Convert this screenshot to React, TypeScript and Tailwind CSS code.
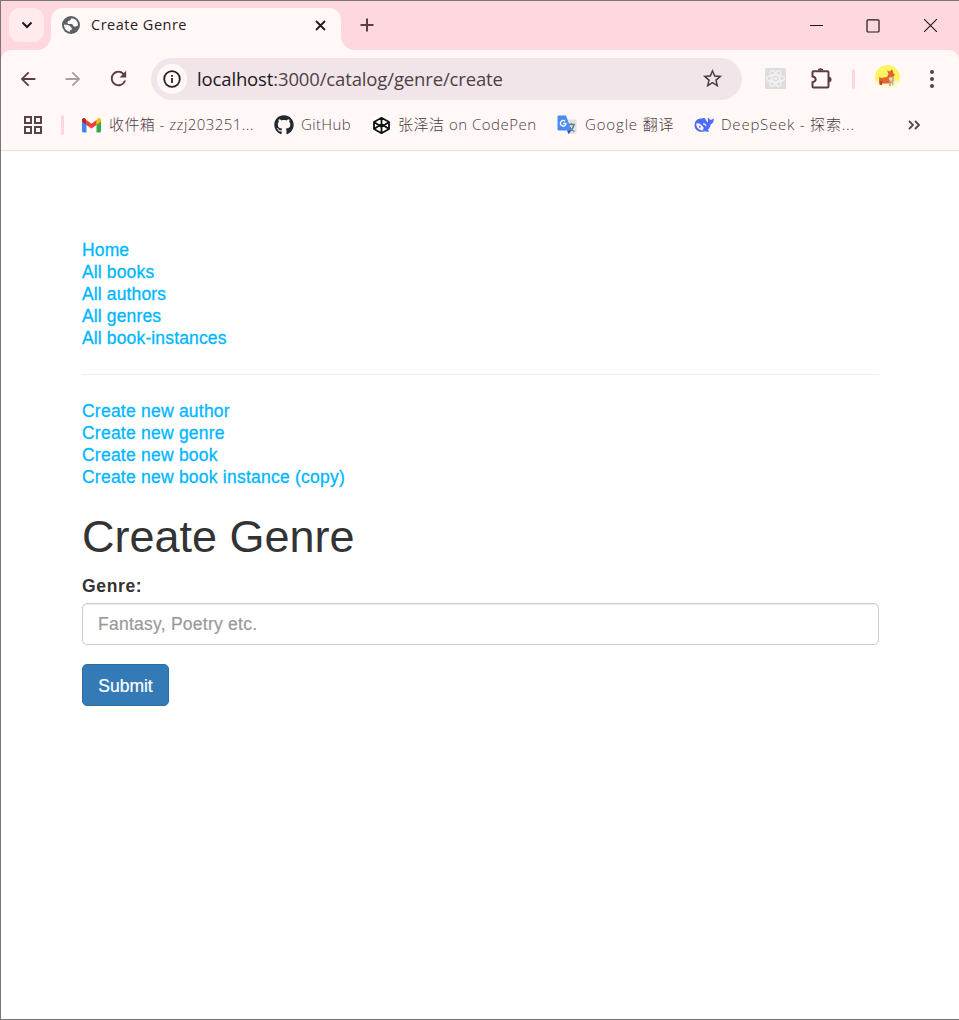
import type { ReactNode } from "react";
import { MdArrowBack, MdArrowForward, MdRefresh, MdStarOutline } from "react-icons/md";
import { FaGithub } from "react-icons/fa";

const uiFont = "font-['Open_Sans','Noto_Sans_CJK_SC',sans-serif]";

function GlobeIcon() {
  return (
    <svg className="mt-[8px] shrink-0" width="18" height="18" viewBox="0 0 18 18">
      <circle cx="9" cy="9" r="9" fill="#5b6065" />
      <path d="M9.500 2.200c-1 .5-.3 1.700-1.500 2.300-1.500.6-2.300.2-2.500 1.700-.1 1.300.5 1.800 2.200 1.800 2.500 0 3.300.2 3.300 1.600 0 1 1.500.8 2.600.8 1.300 0 1.900-.4 2.400-1.400C16.200 5.500 13.500 2.400 9.500 2.200Z" fill="#fff8f7" />
      <path d="M2 8.500c0 4 2.500 6.700 6 7.300v-1.700c2 0 1.800-1 1.800-2.200C8.700 11.500 8.500 10 6.800 9.400 5.500 8.800 3.500 8.700 2 8.500Z" fill="#fff8f7" />
    </svg>
  );
}

function TabStrip() {
  return (
    <div className="flex h-[49px] shrink-0 bg-[#ffd8df] pl-2 pt-[7px]">
      <button className="flex h-[34px] w-[35px] items-center justify-center rounded-[11px] bg-[#ffebed]" aria-label="Search tabs">
        <svg width="12" height="8" viewBox="0 0 12 8" fill="none" stroke="#1d1718" strokeWidth="2">
          <path d="M1.500 1.500 6 6l4.500-4.500" />
        </svg>
      </button>
      <div className="relative ml-[7px] flex h-[42px] w-[290px] rounded-t-[12px] bg-[#fff8f7] pl-[11px]">
        <svg className="absolute bottom-0 -left-[14px]" width="14" height="14">
          <path d="M14 0v14H0A14 14 0 0 0 14 0" fill="#fff8f7" />
        </svg>
        <svg className="absolute bottom-0 -right-[14px]" width="14" height="14">
          <path d="M0 0v14h14A14 14 0 0 1 0 0" fill="#fff8f7" />
        </svg>
        <GlobeIcon />
        <span className="ml-[11px] mt-[5px] w-[224px] text-[14.5px] leading-6 tracking-[0.5px] text-[#2a2022]">Create Genre</span>
        <svg className="mt-[12px] shrink-0" width="11" height="11" viewBox="0 0 11 11" stroke="#241a1c" strokeWidth="1.800">
          <path d="m1 1 9 9M10 1l-9 9" />
        </svg>
      </div>
      <svg className="ml-[19px] mt-[10px]" width="14" height="14" viewBox="0 0 14 14" stroke="#5a3e43" strokeWidth="2">
        <path d="M7 .5v13M.5 7h13" />
      </svg>
      <div className="ml-auto flex pr-[22px] pt-[11px] text-[#1d1718]">
        <svg width="13" height="13" stroke="currentColor" strokeWidth="1">
          <path d="M0 6.500h13" />
        </svg>
        <svg className="ml-[43px]" width="14" height="14" fill="none" stroke="currentColor" strokeWidth="1.200">
          <rect x="1" y=".8" width="12" height="12.200" rx="1" />
        </svg>
        <svg className="ml-[44px]" width="13" height="13" stroke="currentColor" strokeWidth="1.100">
          <path d="m0 0 13 13M13 0 0 13" />
        </svg>
      </div>
    </div>
  );
}

function ReactBadge() {
  return (
    <svg width="21" height="21" viewBox="0 0 21 21">
      <rect width="21" height="21" rx="1.500" fill="#dedddd" />
      <g fill="none" stroke="#f7f5f4" strokeWidth="1.100">
        <ellipse cx="10.500" cy="10.500" rx="9" ry="3.600" />
        <ellipse cx="10.500" cy="10.500" rx="9" ry="3.600" transform="rotate(60 10.500 10.500)" />
        <ellipse cx="10.500" cy="10.500" rx="9" ry="3.600" transform="rotate(120 10.500 10.500)" />
      </g>
      <circle cx="10.500" cy="10.500" r="1.600" fill="#f7f5f4" />
    </svg>
  );
}

function PuzzleIcon() {
  return (
    <svg width="22" height="22" viewBox="0 0 22 22">
      <path
        d="M3.500 3.300h14q1 0 1 1v14.200q0 1-1 1h-14q-1 0-1-1v-4.300c4.200-.7 4.200-5 0-5.700V4.300q0-1 1-1Z"
        fill="none"
        stroke="#5a3e43"
        strokeWidth="2"
      />
      <path d="M7.800 2.600a2.700 2.400 0 0 1 5.400 0ZM19 8.800a2.500 2.700 0 0 1 0 5.400Z" fill="#5a3e43" />
    </svg>
  );
}

function CorgiAvatar() {
  return (
    <svg width="25" height="25" viewBox="0 0 25 25">
      <defs>
        <linearGradient id="sun" x1="0" y1="0" x2="0" y2="1">
          <stop offset="0.4" stopColor="#fff45f" />
          <stop offset="0.6" stopColor="#fff36c" />
          <stop offset="0.72" stopColor="#fcf9d2" />
          <stop offset="1" stopColor="#fffbe4" />
        </linearGradient>
      </defs>
      <circle cx="12.500" cy="12.500" r="12.500" fill="url(#sun)" />
      <path d="M4.500 11.500 6 13l6-1 1.500-3L12 5.500l3 1 2-2 1 3.500 2 1.500-1.500 2L18 17l-2 1.500H6L4.500 20 4 15Z" fill="#df672d" />
      <path d="m15.500 6.500 1.500-2 .7 3.500ZM4.500 16h3l-.5 4H5Z" fill="#b84c24" />
      <path d="M13.500 12.500 18 11.500l1 4-1.500 3-3-2ZM14 17.500h2V21h-2ZM17 17h1.500v3.500H17Z" fill="#c9b28b" />
      <path d="m14.500 12.500 2.500.5-.5 3-2-1Z" fill="#efe0c4" />
    </svg>
  );
}

function Toolbar() {
  return (
    <div className="flex h-[57px] items-center rounded-t-[10px] bg-[#fff8f7] pl-[16px] text-[#5a3e43]">
      <MdArrowBack size={22} />
      <MdArrowForward className="ml-[23px] text-[#ac9da0]" size={22} />
      <MdRefresh className="ml-[23px]" size={23} />
      <div className="ml-[21px] flex h-[42px] w-[591px] items-center rounded-full bg-[#f1e5ea] pl-1.5 pr-[18px]">
        <span className="flex size-[30px] items-center justify-center rounded-full bg-[#fff8f7]">
          <svg width="18" height="18" viewBox="0 0 18 18" fill="none" stroke="#2a2023" strokeWidth="1.800">
            <circle cx="9" cy="9" r="7.800" />
            <path d="M9 8v5M9 5v1.800" />
          </svg>
        </span>
        <span className="ml-[10px] whitespace-nowrap text-[18.500px] tracking-[-0.14px] text-[#4d4044]">
          <span className="text-[#1d1719]">localhost</span>:3000/catalog/genre/create
        </span>
        <MdStarOutline className="ml-auto" size={23} color="#4c3d41" />
      </div>
      <div className="ml-[23px]"><ReactBadge /></div>
      <div className="ml-[24px]"><PuzzleIcon /></div>
      <span className="ml-[20px] h-5 w-[3px] rounded bg-[#ffd8df]" />
      <div className="ml-[20px] -mt-0.5"><CorgiAvatar /></div>
      <svg className="ml-[29px]" width="6" height="20" fill="#5a3e43">
        <circle cx="3" cy="3" r="2" /><circle cx="3" cy="10" r="2" /><circle cx="3" cy="17" r="2" />
      </svg>
    </div>
  );
}

const GmailIcon = (
  <svg width="19" height="15" viewBox="0 0 19 15">
    <path d="M0 2.500V13q0 1.500 1.500 1.500h3V6Z" fill="#4285f4" />
    <path d="M19 2.500V13q0 1.500-1.500 1.500h-3V6Z" fill="#34a853" />
    <path d="M14.500 2v5L19 3.500V2c0-2-2-2.300-3-1.500Z" fill="#fbbc04" />
    <path d="M4.500 2v5L9.500 10.500l5-3.500V2l-5 3.700Z" fill="#ea4335" />
    <path d="M0 2v1.500L4.500 7V2L3 .5C2-.3 0 0 0 2Z" fill="#c5221f" />
  </svg>
);

const CodePenIcon = (
  <svg width="19" height="19" viewBox="0 0 19 19">
    <rect width="19" height="19" fill="#fff" />
    <path d="M9.500 1.800 17 6v7l-7.500 4.200L2 13V6ZM2 6l7.500 5L17 6M2 13l7.500-5L17 13M9.500 2v6M9.500 11v6" fill="none" stroke="#111" strokeWidth="1.800" strokeLinejoin="round" />
  </svg>
);

const TranslateIcon = (
  <svg width="20" height="20" viewBox="0 0 20 20">
    <path d="M7 4.500h11.500q1 0 1 1V18q0 1-1 1H12Z" fill="#dfe3e6" />
    <path d="M11 9.500h7M14.500 8v1.500M17 10c-.7 3-2.500 5-5 6.500M12 11c1 2.500 3 4.500 5.500 5.500" fill="none" stroke="#667f86" strokeWidth="1.300" />
    <path d="M1.500.5H9L14.500 15.500H1.500q-1 0-1-1v-13q0-1 1-1Z" fill="#4a8cf4" />
    <path d="M10 15.500h4.500L11.500 19Z" fill="#3047b2" />
    <path d="M8.200 6.300a2.800 2.800 0 1 0 .8 2.200H6.300" fill="none" stroke="#fff" strokeWidth="1.300" />
  </svg>
);

const WhaleIcon = (
  <svg width="20" height="16" viewBox="0 0 20 16">
    <path
      d="M.7 7C1.200 3.500 4 1.300 8 1.600c.7-.8 2-.9 3-.4.300 1.600 1.700 2.700 3 4.200.3-1.800-.6-3-.2-4.600 1.200.3 1.700 1 2.100 2 1.300.3 2.300-.3 3.800-1.200.3 2.800-.9 4.900-3 5.700-.3 3-1.700 4.600-3 5.600l1.600 1.300c-1.600.8-3 .7-4.400.1C5.200 16.300-.5 12.800.7 7Z"
      fill="#4d6bfe"
    />
    <path d="M2.500 6.300c3-.7 5.200 1.700 7 4.200.7 1 .1 1.500-1 1.200l1 1.700C5.600 13.800 1.500 10.500 2.500 6.300Z" fill="#fff8f7" />
    <path d="M9.200 6.300c2-.2 3.300 1.300 3.300 3.200-.9-.5-1.300-1.500-3.300-1.700Z" fill="#fff8f7" />
    <circle cx="5.800" cy="9.800" r="1" fill="#4d6bfe" />
  </svg>
);

function Bookmark({ icon, label, className, textClass }: { icon: ReactNode; label: string; className: string; textClass: string }) {
  return (
    <div className={`flex shrink-0 items-center ${className}`}>
      {icon}
      <span className={`-mt-0.5 whitespace-nowrap text-[15px] ${textClass}`}>{label}</span>
    </div>
  );
}

function BookmarksBar() {
  return (
    <div className="flex h-[44px] items-center border-b border-[#f9d9dc] bg-[#fff8f7] pb-[7px] pl-[23px] font-light text-[#4a3b3f]">
      <svg width="18" height="18" fill="none" stroke="#574448" strokeWidth="2">
        <path d="M1 1h6v6H1ZM11 1h6v6h-6ZM1 11h6v6H1ZM11 11h6v6h-6Z" />
      </svg>
      <span className="ml-[19px] mr-px h-5 w-[3px] rounded bg-[#ffd8df]" />
      <Bookmark icon={GmailIcon} label="收件箱 - zzj203251..." className="ml-[17px] w-[192px]" textClass="ml-[8px] tracking-[0.430px]" />
      <Bookmark icon={<FaGithub size={20} color="#22292f" />} label="GitHub" className="w-[98px]" textClass="ml-[7px] tracking-[0.350px]" />
      <Bookmark icon={CodePenIcon} label="张泽洁 on CodePen" className="w-[185px]" textClass="ml-[7px] tracking-[0.500px]" />
      <Bookmark icon={TranslateIcon} label="Google 翻译" className="w-[137px]" textClass="ml-[8px] tracking-[0.850px]" />
      <Bookmark icon={WhaleIcon} label="DeepSeek - 探索..." className="w-[214px]" textClass="ml-[7px] tracking-[0.780px]" />
      <svg width="13" height="10" viewBox="0 0 13 10" fill="none" stroke="#574448" strokeWidth="1.800">
        <path d="m1 1 4 4-4 4M7 1l4 4-4 4" />
      </svg>
    </div>
  );
}

const catalogLinks = ["Home", "All books", "All authors", "All genres", "All book-instances"];
const createLinks = ["Create new author", "Create new genre", "Create new book", "Create new book instance (copy)"];

function LinkList({ links, className }: { links: string[]; className: string }) {
  return (
    <ul className={`text-[17.500px] leading-[22px] text-[#00b7ff] [-webkit-text-stroke:0.3px] ${className}`}>
      {links.map((link) => (
        <li key={link}><a href="#">{link}</a></li>
      ))}
    </ul>
  );
}

function Page() {
  return (
    <main className="flex-1 bg-white pl-[81px] pr-[80px] pt-[88px] font-['Liberation_Sans',Arial,sans-serif] text-[17.500px] text-[#333]">
      <LinkList links={catalogLinks} className="tracking-[0.140px]" />
      <hr className="mb-[25px] mt-[25px] border-[#eee]" />
      <LinkList links={createLinks} className="tracking-[0.230px]" />
      <h1 className="mt-[24px] text-[45px] font-normal leading-[50px]">Create Genre</h1>
      <form>
        <label className="mt-[12px] block font-bold leading-[25px] tracking-[0.650px]" htmlFor="name">Genre:</label>
        <input
          id="name"
          className="mt-[4px] block h-[42px] w-full rounded-[5px] border border-[#ccc] px-[15px] tracking-[0.250px] shadow-[inset_0_1px_1px_rgba(0,0,0,0.075)] [-webkit-text-stroke:0.2px] placeholder:text-[#999]"
          placeholder="Fantasy, Poetry etc."
        />
        <button type="button" className="mt-[19px] h-[42px] w-[87px] rounded-[5px] border border-[#2e6da4] bg-[#337ab7] pt-0.5 text-white [-webkit-text-stroke:0.2px]">Submit</button>
      </form>
    </main>
  );
}

export default function App() {
  return (
    <div className={`flex h-[1020px] w-[959px] flex-col overflow-hidden border-y border-l border-[#777] ${uiFont}`}>
      <TabStrip />
      <header className="shrink-0 bg-[#ffd8df]">
        <Toolbar />
        <BookmarksBar />
      </header>
      <Page />
    </div>
  );
}
